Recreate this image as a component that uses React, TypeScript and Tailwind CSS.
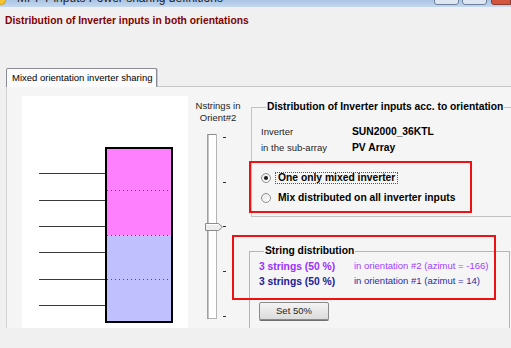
import React from 'react'

const TitleBar: React.FC = () => (
  <div className="relative h-[7px] overflow-hidden bg-gradient-to-b from-[#aac4e3] to-[#c5d9ef] flex">
    <div className="ml-[-3px] mt-[-4px] w-[9px] h-[9px] rounded-full bg-[#f5c431] border border-[#c99a10] shrink-0" />
    <div className="ml-[11px] mt-[-9px] text-[12px] leading-[14px] text-[#1e1e1e] whitespace-nowrap">
      MPPT inputs Power sharing definitions
    </div>
    <div className="ml-auto flex gap-[3px] mt-[-12px] shrink-0">
      <div className="w-[25px] h-[17px] rounded-b-[3px] border border-[#6f809b] bg-[#dde6f1]" />
      <div className="w-[25px] h-[17px] rounded-b-[3px] border border-[#6f809b] bg-[#dde6f1]" />
      <div className="ml-[1px] w-[20px] h-[17px] rounded-bl-[3px] border border-[#8a3a2e] bg-[#d2553f]" />
    </div>
  </div>
)

const Chart: React.FC = () => {
  const lines = [77, 104, 130, 156, 183, 209]
  return (
    <svg width="166" height="232" className="block">
      <rect x="0" y="0" width="166" height="232" fill="#ffffff" />
      {lines.map((y) => (
        <line key={y} x1="17" x2="84" y1={y + 0.5} y2={y + 0.5} stroke="#3a3a3a" strokeWidth="1" />
      ))}
      <rect x="84" y="52" width="66" height="87" fill="#ff80ff" />
      <rect x="84" y="139" width="66" height="87" fill="#c0c0ff" />
      {[94, 139, 183].map((y) => (
        <line key={y} x1="85" x2="149" y1={y + 0.5} y2={y + 0.5} stroke="#505050" strokeWidth="1" strokeDasharray="1 3" />
      ))}
      <rect x="84" y="52" width="66" height="174" fill="none" stroke="#000000" strokeWidth="2" />
    </svg>
  )
}

const Slider: React.FC = () => {
  const ticks = [7, 52, 96, 141, 186]
  return (
    <svg width="28" height="192" className="block">
      <rect x="4.5" y="4.5" width="9" height="184" fill="#ffffff" stroke="#b4b4b4" />
      <line x1="5" x2="5" y1="4" y2="189" stroke="#8c8c8c" />
      <line x1="5" x2="13" y1="4.5" y2="4.5" stroke="#8c8c8c" />
      {ticks.map((y) => (
        <line key={y} x1="20" x2="23" y1={y + 0.5} y2={y + 0.5} stroke="#303030" />
      ))}
      <path d="M2.5 93.5 H15.5 L19.5 97 L15.5 100.5 H2.5 Z" fill="#ececec" stroke="#8a8a8a" />
      <line x1="3" x2="15" y1="94.5" y2="94.5" stroke="#ffffff" />
    </svg>
  )
}

const Radio: React.FC<{ checked?: boolean }> = ({ checked }) => (
  <div className="w-[10px] h-[10px] rounded-full border border-[#8e8f8f] bg-gradient-to-br from-[#e6e6e6] to-[#ffffff] flex items-center justify-center shrink-0">
    {checked && <div className="w-[4px] h-[4px] rounded-full bg-[#1a1a1a]" />}
  </div>
)

export default function App() {
  return (
    <div className="relative w-[511px] h-[348px] overflow-hidden bg-[#f0f0f0] font-['Liberation_Sans',Arial,sans-serif] text-black">
      <TitleBar />

      <div className="pl-[5px] pt-[8px] text-[10.3px] leading-[12px] font-bold text-[#800000] whitespace-nowrap">
        Distribution of Inverter inputs in both orientations
      </div>

      {/* tab strip */}
      <div className="mt-[41px] ml-[6px] flex h-[19px]">
        <div className="w-[151px] h-[19px] border-t border-l border-r border-[#898c95] bg-[#fbfbfb] rounded-t-[2px] flex items-center pl-[5px] text-[9.5px] whitespace-nowrap shadow-[1px_0_0_#c8c8c8]">
          Mixed orientation inverter sharing
        </div>
        <div className="flex-1 border-b border-[#c4c4c4]" />
      </div>

      {/* tab page */}
      <div className="ml-[6px] w-[510px] h-[241px] border-l border-[#d4d4d4] bg-[#f5f5f5] overflow-hidden flex items-start">
        <div className="ml-[15px] mt-[9px] shrink-0">
          <Chart />
        </div>

        <div className="w-[60px] shrink-0 pt-[13px] flex flex-col">
          <div className="text-center text-[9.5px] leading-[12px] text-[#1e1e1e]">
            Nstrings in
            <br />
            Orient#2
          </div>
          <div className="ml-[15px] mt-[6px]">
            <Slider />
          </div>
        </div>

        <div className="ml-[1px] w-[262px] shrink-0 flex flex-col">
          <fieldset className="mt-[14px] ml-[2px] w-[268px] shrink-0 border border-[#c2c2c2] pt-[11px] pb-[10px] pl-[9px]">
            <legend className="ml-[5px] px-[1px] text-[10.3px] leading-[12px] font-bold whitespace-nowrap">
              Distribution of Inverter inputs acc. to orientation
            </legend>
            <div className="flex items-center h-[16px] text-[9.5px] whitespace-nowrap">
              <span className="w-[91px] text-[#1e1e1e]">Inverter</span>
              <span className="text-[10.3px] font-bold">SUN2000_36KTL</span>
            </div>
            <div className="flex items-center h-[16px] text-[9.5px] whitespace-nowrap">
              <span className="w-[91px] text-[#1e1e1e]">in the sub-array</span>
              <span className="text-[10.3px] font-bold">PV Array</span>
            </div>
            <div className="mt-[14px] flex items-center h-[16px] text-[10.3px] font-bold whitespace-nowrap">
              <Radio checked />
              <span className="ml-[4px] px-[2px] border border-dotted border-[#555555] leading-[10px]">
                One only mixed inverter
              </span>
            </div>
            <div className="mt-[4px] flex items-center h-[16px] text-[10.3px] font-bold whitespace-nowrap">
              <Radio />
              <span className="ml-[7px]">Mix distributed on all inverter inputs</span>
            </div>
          </fieldset>

          <fieldset className="mt-[28px] w-[261px] shrink-0 border border-[#b4b4b4] pt-[2px] pb-[7px] pl-[9px]">
            <legend className="ml-[5px] px-[1px] text-[10.3px] leading-[12px] font-bold whitespace-nowrap">
              String distribution
            </legend>
            <div className="flex items-center h-[15px] whitespace-nowrap">
              <span className="w-[95px] text-[10.3px] font-bold text-[#9b30ff]">3 strings (50 %)</span>
              <span className="text-[9.5px] text-[#a040ff]">in orientation #2 (azimut = -166)</span>
            </div>
            <div className="flex items-center h-[15px] whitespace-nowrap">
              <span className="w-[95px] text-[10.3px] font-bold text-[#20209a]">3 strings (50 %)</span>
              <span className="text-[9.5px] text-[#2a2aa6]">in orientation #1 (azimut = 14)</span>
            </div>
            <button className="mt-[13px] w-[70px] h-[18px] rounded-[2px] border border-[#8a8a8a] bg-gradient-to-b from-[#f4f4f4] to-[#dcdcdc] text-[9.5px] leading-[16px] text-[#1e1e1e] shadow-[0_1px_0_#707070]">
              Set 50%
            </button>
          </fieldset>
        </div>
      </div>

      {/* red annotation frames */}
      <div className="absolute left-[249px] top-[161px] w-[223px] h-[52px] border-2 border-[#ee1111]" />
      <div className="absolute left-[232px] top-[235px] w-[264px] h-[65px] border-2 border-[#ee1111]" />
    </div>
  )
}
